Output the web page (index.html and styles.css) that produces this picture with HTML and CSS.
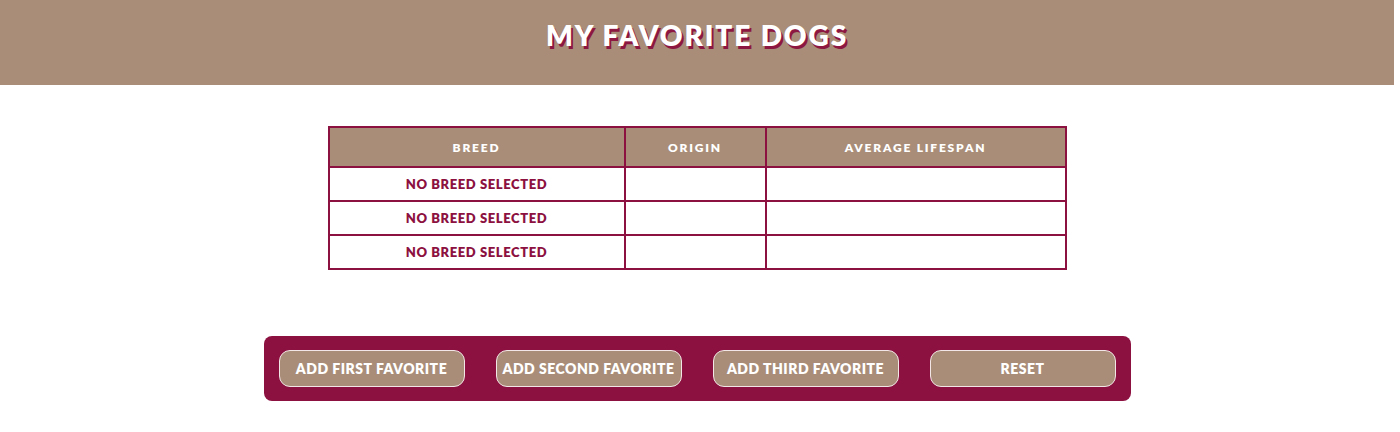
FILE: index.html
```html
<!DOCTYPE html>
<html lang="en">
<head>
<meta charset="utf-8">
<title>My Favorite Dogs</title>
<link rel="stylesheet" href="styles.css">
</head>
<body>
<header class="banner">
  <h1 class="title">MY FAVORITE DOGS</h1>
</header>
<main class="content">
  <table class="dogs">
    <thead>
      <tr><th class="col-breed">BREED</th><th class="col-origin">ORIGIN</th><th class="col-life">AVERAGE LIFESPAN</th></tr>
    </thead>
    <tbody>
      <tr><td>NO BREED SELECTED</td><td></td><td></td></tr>
      <tr><td>NO BREED SELECTED</td><td></td><td></td></tr>
      <tr><td>NO BREED SELECTED</td><td></td><td></td></tr>
    </tbody>
  </table>
  <div class="panel">
    <button class="btn">ADD FIRST FAVORITE</button>
    <button class="btn">ADD SECOND FAVORITE</button>
    <button class="btn">ADD THIRD FAVORITE</button>
    <button class="btn">RESET</button>
  </div>
</main>
</body>
</html>
```
FILE: styles.css
```css
html, body {
  margin: 0;
  padding: 0;
  background: #ffffff;
}
body {
  font-family: Lato, "Open Sans", "Liberation Sans", sans-serif;
  padding-right: 6px;
}
.banner {
  height: 85px;
  box-sizing: border-box;
  background: #a98d78;
  display: flex;
  justify-content: center;
  padding-top: 21px;
}
.title {
  margin: 0;
  color: #ffffff;
  font-size: 28px;
  font-weight: 800;
  letter-spacing: 1.9px;
  text-shadow: 2px 3px 0 #8c1740;
  line-height: 1;
}
.content {
  display: flex;
  flex-direction: column;
  align-items: center;
  padding-top: 41px;
}
.dogs {
  border-collapse: collapse;
  border: 2px solid #8c1040;
  width: 739px;
}
.dogs th, .dogs td {
  border: 2px solid #8c1040;
  text-align: center;
  padding: 0;
}
.dogs th {
  background: #a98d78;
  color: #ffffff;
  font-size: 12px;
  font-weight: 800;
  letter-spacing: 1.8px;
  height: 38px;
}
.dogs td {
  color: #8c1040;
  font-size: 13px;
  font-weight: 800;
  letter-spacing: 0.6px;
  height: 32px;
}
.col-breed { width: 294px; }
.col-origin { width: 139px; }
.panel {
  margin-top: 66px;
  background: #8c1040;
  border-radius: 8px;
  padding: 14px 15px;
  display: flex;
  gap: 31px;
}
.btn {
  width: 186px;
  height: 37px;
  background: #a98d78;
  border: 1.5px solid #f2e6e6;
  border-radius: 11px;
  color: #ffffff;
  font-family: Lato, "Open Sans", "Liberation Sans", sans-serif;
  font-size: 14px;
  font-weight: 800;
  letter-spacing: 0.5px;
  cursor: pointer;
  padding: 0;
}
```
